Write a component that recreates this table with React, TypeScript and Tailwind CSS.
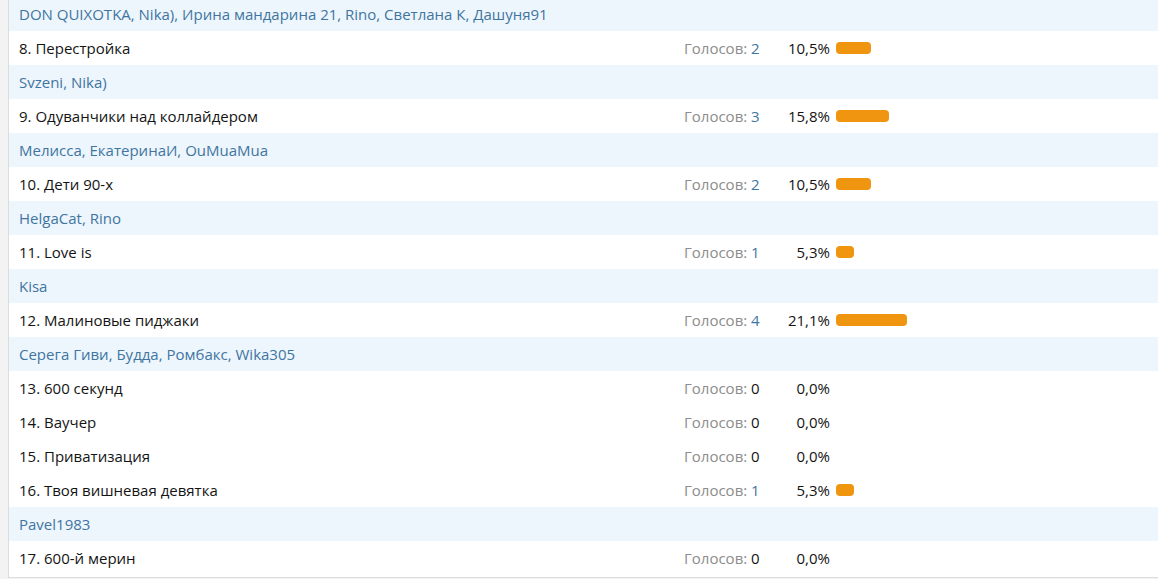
import React, { FC } from "react";

type Item = {
  voters?: string;
  title: string;
  votes: number;
  pct: string;
};

const items: Item[] = [
  {
    voters: "DON QUIXOTKA, Nika), Ирина мандарина 21, Rino, Светлана К, Дашуня91",
    title: "8. Перестройка",
    votes: 2,
    pct: "10,5",
  },
  { voters: "Svzeni, Nika)", title: "9. Одуванчики над коллайдером", votes: 3, pct: "15,8" },
  { voters: "Мелисса, ЕкатеринаИ, OuMuaMua", title: "10. Дети 90-х", votes: 2, pct: "10,5" },
  { voters: "HelgaCat, Rino", title: "11. Love is", votes: 1, pct: "5,3" },
  { voters: "Kisa", title: "12. Малиновые пиджаки", votes: 4, pct: "21,1" },
  {
    voters: "Серега Гиви, Будда, Ромбакс, Wika305",
    title: "13. 600 секунд",
    votes: 0,
    pct: "0,0",
  },
  { title: "14. Ваучер", votes: 0, pct: "0,0" },
  { title: "15. Приватизация", votes: 0, pct: "0,0" },
  { title: "16. Твоя вишневая девятка", votes: 1, pct: "5,3" },
  { voters: "Pavel1983", title: "17. 600-й мерин", votes: 0, pct: "0,0" },
];

const ResultRow: FC<{ item: Item }> = ({ item }) => {
  const width = Math.round(parseFloat(item.pct.replace(",", ".")) * 3.37);
  return (
    <div className="flex items-center h-[34px] bg-white text-[15px] text-[#141414]">
      <div className="w-[675px] pl-[10px] truncate">{item.title}</div>
      <div className="w-[100px] text-[#8c8c8c]">
        Голосов:{" "}
        <span className={item.votes > 0 ? "text-[#3f75a0]" : "text-[#141414]"}>
          {item.votes}
        </span>
      </div>
      <div className="w-[46px] text-right">{item.pct}%</div>
      {width > 0 && (
        <div
          className="ml-[6px] h-[12px] rounded-[4px] bg-[#f0950f]"
          style={{ width }}
        />
      )}
    </div>
  );
};

const VotersRow: FC<{ text: string }> = ({ text }) => (
  <div className="flex items-center h-[34px] pl-[10px] bg-[#edf5fd] text-[15px] text-[#3f75a0]">
    {text}
  </div>
);

export default function App() {
  return (
    <div
      className="h-[579px] overflow-hidden bg-[#f3f3f3] pl-[8px]"
      style={{ fontFamily: '"Open Sans", "Noto Sans", sans-serif' }}
    >
      <div className="-mt-[3px] pb-[2px] bg-white border-l border-b border-[#dcdcdc]">
        {items.map((it) => (
          <React.Fragment key={it.title}>
            {it.voters && <VotersRow text={it.voters} />}
            <ResultRow item={it} />
          </React.Fragment>
        ))}
      </div>
    </div>
  );
}
